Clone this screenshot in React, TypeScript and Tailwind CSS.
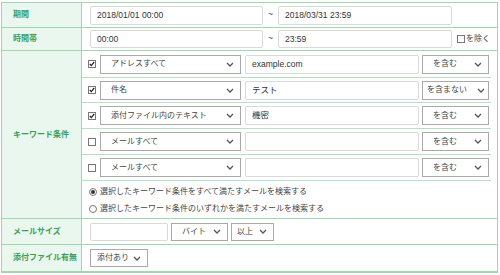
import type { ReactNode } from "react";

const FONT = "font-['Liberation_Sans','Noto_Sans_CJK_JP',sans-serif]";

function Chevron() {
  return (
    <svg width="8" height="5" viewBox="0 0 8 5" className="shrink-0" aria-hidden="true">
      <path d="M1 1l3 3 3-3" fill="none" stroke="#555" strokeWidth="1.3" />
    </svg>
  );
}

function Select({ label, className }: { label: string; className: string }) {
  return (
    <div
      className={`flex items-center justify-between border border-[#a9a9a9] bg-white pr-[6px] text-[8px] text-[#444] ${className}`}
    >
      <span className="whitespace-nowrap">{label}</span>
      <Chevron />
    </div>
  );
}

function TextBox({ value, className }: { value?: string; className: string }) {
  return (
    <div
      className={`flex items-center rounded-[2px] border border-[#d9d9d9] bg-white px-[6px] text-[8.5px] text-[#333] ${className}`}
    >
      {value}
    </div>
  );
}

function Check({ on }: { on: boolean }) {
  return (
    <span className="flex h-[8px] w-[8px] items-center justify-center border border-[#777] bg-white">
      {on && (
        <svg width="6" height="6" viewBox="0 0 6 6" aria-hidden="true">
          <path d="M0.8 3l1.5 1.6L5.2 1" fill="none" stroke="#222" strokeWidth="1.2" />
        </svg>
      )}
    </span>
  );
}

function Label({ children }: { children: ReactNode }) {
  return (
    <div className="flex items-center border-r border-[#a3d6b0] bg-[#eaf7ef] pl-[11px] text-[8px] font-bold text-[#3a9d58]">
      {children}
    </div>
  );
}

type KeywordRow = { on: boolean; field: string; text: string; op: string; opPad: string; h: string };

const KEYWORD_ROWS: KeywordRow[] = [
  { on: true, field: "アドレスすべて", text: "example.com", op: "を含む", opPad: "pl-[10px]", h: "h-[27px]" },
  { on: true, field: "件名", text: "テスト", op: "を含まない", opPad: "pl-[4px] !pr-[3px]", h: "h-[25px]" },
  { on: true, field: "添付ファイル内のテキスト", text: "機密", op: "を含む", opPad: "pl-[10px]", h: "h-[26px]" },
  { on: false, field: "メールすべて", text: "", op: "を含む", opPad: "pl-[10px]", h: "h-[26px]" },
  { on: false, field: "メールすべて", text: "", op: "を含む", opPad: "pl-[10px]", h: "h-[26px]" },
];

export default function App() {
  return (
    <div className={`h-[275px] w-[500px] bg-white pl-[1px] pt-[2px] ${FONT}`}>
      <div className="w-[497px] border border-b-2 border-[#a3d6b0]">
        {/* 期間 */}
        <div className="grid h-[25px] grid-cols-[80px_1fr] border-b border-[#a3d6b0]">
          <Label>期間</Label>
          <div className="flex items-center pl-[8px]">
            <TextBox value="2018/01/01 00:00" className="h-[19px] w-[173px]" />
            <span className="w-[15px] text-center text-[9px] text-[#555]">~</span>
            <TextBox value="2018/03/31 23:59" className="h-[19px] w-[174px]" />
          </div>
        </div>

        {/* 時間帯 */}
        <div className="grid h-[23px] grid-cols-[80px_1fr] border-b border-[#a3d6b0]">
          <Label>時間帯</Label>
          <div className="flex items-center pl-[8px]">
            <TextBox value="00:00" className="h-[18px] w-[173px]" />
            <span className="w-[15px] text-center text-[9px] text-[#555]">~</span>
            <TextBox value="23:59" className="h-[18px] w-[174px]" />
            <span className="ml-[5px] flex items-center gap-[1px] text-[8px] text-[#444]">
              <Check on={false} />
              を除く
            </span>
          </div>
        </div>

        {/* キーワード条件 */}
        <div className="grid h-[168px] grid-cols-[80px_1fr] border-b border-[#a3d6b0]">
          <Label>キーワード条件</Label>
          <div className="flex flex-col">
            {KEYWORD_ROWS.map((row, i) => (
              <div
                key={i}
                className={`mr-[6px] flex items-center border-b border-[#b8e0c2] pl-[6px] ${row.h}`}
              >
                <Check on={row.on} />
                <Select label={row.field} className="ml-[4px] h-[19px] w-[141px] pl-[10px]" />
                <TextBox value={row.text} className="ml-[4px] h-[19px] w-[174px]" />
                <Select label={row.op} className={`ml-[3px] h-[19px] w-[67px] ${row.opPad}`} />
              </div>
            ))}
            <div className="flex flex-col gap-[5px] pl-[7px] pt-[5px] text-[8px] text-[#444]">
              <label className="flex items-center gap-[3px]">
                <span className="flex h-[8px] w-[8px] items-center justify-center rounded-full border border-[#777]">
                  <span className="h-[4px] w-[4px] rounded-full bg-[#333]" />
                </span>
                選択したキーワード条件をすべて満たすメールを検索する
              </label>
              <label className="flex items-center gap-[3px]">
                <span className="h-[8px] w-[8px] rounded-full border border-[#777]" />
                選択したキーワード条件のいずれかを満たすメールを検索する
              </label>
            </div>
          </div>
        </div>

        {/* メールサイズ */}
        <div className="grid h-[26px] grid-cols-[80px_1fr] border-b border-[#a3d6b0]">
          <Label>メールサイズ</Label>
          <div className="flex items-center pl-[8px]">
            <TextBox className="h-[18px] w-[78px]" />
            <Select label="バイト" className="ml-[3px] h-[18px] w-[57px] pl-[10px]" />
            <Select label="以上" className="ml-[3px] h-[18px] w-[43px] pl-[5px]" />
          </div>
        </div>

        {/* 添付ファイル有無 */}
        <div className="grid h-[26px] grid-cols-[80px_1fr]">
          <Label>添付ファイル有無</Label>
          <div className="flex items-center pl-[8px]">
            <Select label="添付あり" className="h-[18px] w-[58px] pl-[6px]" />
          </div>
        </div>
      </div>
    </div>
  );
}
